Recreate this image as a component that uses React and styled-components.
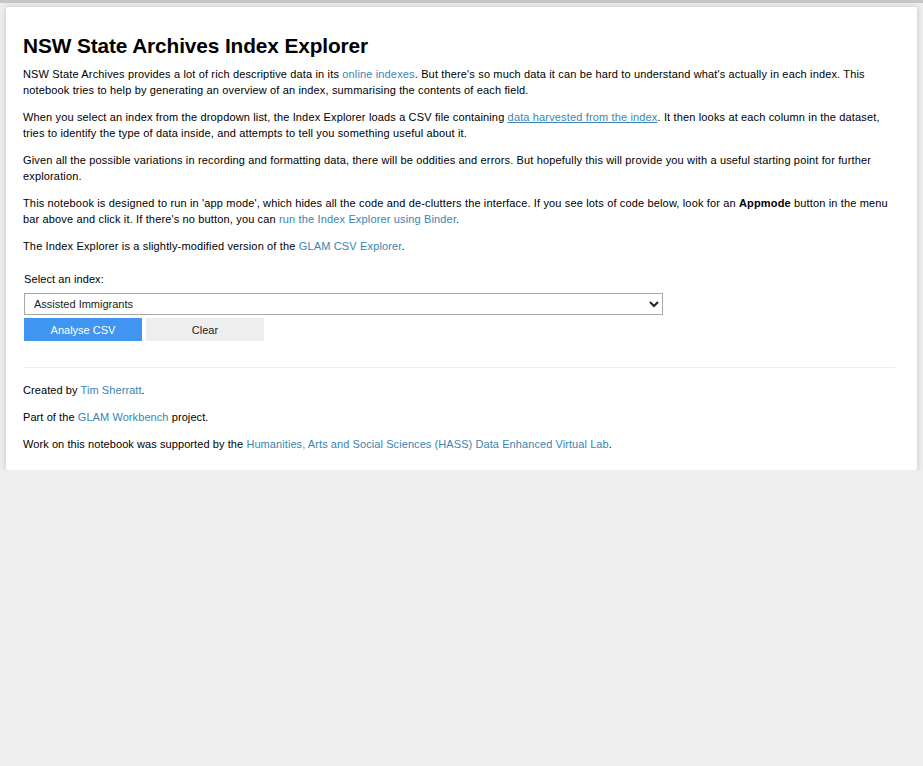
import React from "react";
import styled, { createGlobalStyle } from "styled-components";

const Global = createGlobalStyle`
  html, body { margin: 0; padding: 0; background: #eeeeee; }
  body { font-family: "Liberation Sans", Arial, sans-serif; color: #000; }
`;

const TopBar = styled.div`
  height: 3px;
  background: #c6c6c6;
`;

const Page = styled.div`
  padding: 4px 6px 0 6px;
`;

const Card = styled.div`
  background: #fff;
  box-shadow: 0 0 6px rgba(0, 0, 0, 0.18);
  border-radius: 2px;
  padding: 25px 22px 7px 17px;
`;

const Title = styled.h1`
  margin: 0 0 6px 0;
  font-size: 20.8px;
  line-height: 28px;
  font-weight: bold;
  letter-spacing: -0.1px;
`;

const P = styled.p`
  margin: 0 0 11px 0;
  font-size: 11px;
  line-height: 16px;
  letter-spacing: ${(p) => (p.$tight ? "0.08px" : "0.15px")};
`;

const A = styled.a`
  color: #3a85b3;
  text-decoration: ${(p) => (p.$underline ? "underline" : "none")};
`;

const Form = styled.div`
  display: flex;
  flex-direction: column;
  padding-left: 1px;
  margin-top: 17px;
`;

const Label = styled.label`
  font-size: 11px;
  line-height: 16px;
  margin-bottom: 6px;
  letter-spacing: 0.1px;
`;

const Select = styled.select`
  width: 639px;
  height: 22px;
  box-sizing: border-box;
  border: 1px solid #a8a8a8;
  background: #fff;
  font-family: "Liberation Sans", Arial, sans-serif;
  font-size: 11px;
  padding: 0 0 0 5px;
  margin: 0 0 3px 0;
  border-radius: 0;
  color: #222;
`;

const Buttons = styled.div`
  display: flex;
  gap: 4px;
`;

const Button = styled.button`
  width: 118px;
  height: 23px;
  border: none;
  border-radius: 0;
  font-family: "Liberation Sans", Arial, sans-serif;
  font-size: 11px;
  background: ${(p) => (p.$primary ? "#3f95ef" : "#eeeeee")};
  color: ${(p) => (p.$primary ? "#fff" : "#222")};
  padding: 0;
`;

const Rule = styled.hr`
  border: none;
  border-top: 1px solid #eeeeee;
  margin: 26px 0 14px 0;
`;

const Footer = styled.div``;

export default function App() {
  return (
    <>
      <Global />
      <TopBar />
      <Page>
        <Card>
          <Title>NSW State Archives Index Explorer</Title>
          <P>
            NSW State Archives provides a lot of rich descriptive data in its{" "}
            <A href="#">online indexes</A>. But there's so much data it can be hard to
            understand what's actually in each index. This notebook tries to help by
            generating an overview of an index, summarising the contents of each field.
          </P>
          <P>
            When you select an index from the dropdown list, the Index Explorer loads a CSV
            file containing <A href="#" $underline>data harvested from the index</A>. It then
            looks at each column in the dataset, tries to identify the type of data inside,
            and attempts to tell you something useful about it.
          </P>
          <P>
            Given all the possible variations in recording and formatting data, there will be
            oddities and errors. But hopefully this will provide you with a useful starting
            point for further exploration.
          </P>
          <P>
            This notebook is designed to run in 'app mode', which hides all the code and
            de-clutters the interface. If you see lots of code below, look for an{" "}
            <b>Appmode</b> button in the menu bar above and click it. If there's no button,
            you can <A href="#">run the Index Explorer using Binder</A>.
          </P>
          <P>
            The Index Explorer is a slightly-modified version of the{" "}
            <A href="#">GLAM CSV Explorer</A>.
          </P>
          <Form>
            <Label>Select an index:</Label>
            <Select defaultValue="Assisted Immigrants">
              <option>Assisted Immigrants</option>
            </Select>
            <Buttons>
              <Button $primary>Analyse CSV</Button>
              <Button>Clear</Button>
            </Buttons>
          </Form>
          <Rule />
          <Footer>
            <P $tight>
              Created by <A href="#">Tim Sherratt</A>.
            </P>
            <P $tight>
              Part of the <A href="#">GLAM Workbench</A> project.
            </P>
            <P $tight>
              Work on this notebook was supported by the{" "}
              <A href="#">Humanities, Arts and Social Sciences (HASS) Data Enhanced Virtual Lab</A>.
            </P>
          </Footer>
        </Card>
      </Page>
    </>
  );
}
